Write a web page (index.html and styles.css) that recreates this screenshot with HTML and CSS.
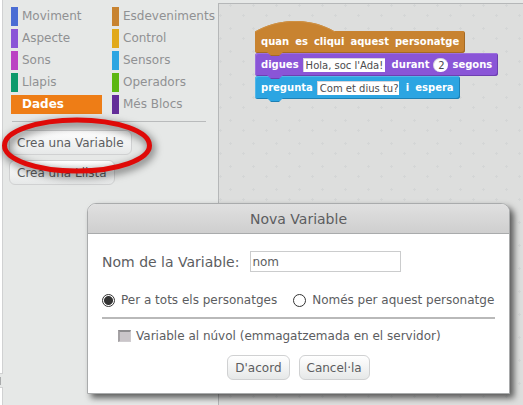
FILE: index.html
```html
<!DOCTYPE html>
<html lang="ca">
<head>
<meta charset="utf-8">
<title>Nova Variable</title>
<link rel="stylesheet" href="styles.css">
</head>
<body>
<div class="app">
  <div class="stage-edge"><span></span></div>
  <aside class="palette">
    <nav class="categories">
      <a class="cat motion" href="#">Moviment</a>
      <a class="cat events" href="#">Esdeveniments</a>
      <a class="cat looks" href="#">Aspecte</a>
      <a class="cat control" href="#">Control</a>
      <a class="cat sound" href="#">Sons</a>
      <a class="cat sensing" href="#">Sensors</a>
      <a class="cat pen" href="#">Llapis</a>
      <a class="cat operators" href="#">Operadors</a>
      <a class="cat data selected" href="#">Dades</a>
      <a class="cat more" href="#">Més Blocs</a>
    </nav>
    <div class="palette-actions">
      <button class="btn" type="button">Crea una Variable</button>
      <button class="btn" type="button">Crea una Llista</button>
    </div>
  </aside>
  <main class="scripts">
    <div class="stack">
      <div class="block hat">
        <svg class="hat-top" width="82" height="12" viewBox="0 0 82 12" aria-hidden="true">
          <path d="M0 12V10.500C24 -3.500 56 -3.500 79 10L82 11V12Z" fill="#c88330"/>
          <path d="M0 11C24 -3 56 -3 80 11" fill="none" stroke="#cf9144"/>
        </svg>
        <span>quan</span><span>es</span><span>cliqui</span><span>aquest</span><span>personatge</span>
      </div>
      <div class="block say">
        <label for="say-text">digues</label>
        <input id="say-text" class="slot" type="text" value="Hola, soc l'Ada!">
        <label class="after" for="say-secs">durant</label>
        <input id="say-secs" class="slot number" type="text" value="2">
        <span>segons</span>
      </div>
      <div class="block ask">
        <label for="ask-text">pregunta</label>
        <input id="ask-text" class="slot" type="text" value="Com et dius tu?">
        <span class="after">i</span><span class="last">espera</span>
      </div>
    </div>
  </main>
</div>

<svg class="marker" width="164" height="76" viewBox="0 0 164 76" aria-hidden="true">
  <ellipse cx="77" cy="34.500" rx="72.500" ry="25.500" fill="none" stroke="#df0a08" stroke-width="5"/>
</svg>

<form class="dialog" role="dialog" aria-labelledby="dialog-title">
  <h1 class="dialog-title" id="dialog-title">Nova Variable</h1>
  <div class="dialog-body">
    <div class="name-row">
      <label for="name">Nom de la Variable:</label>
      <input id="name" type="text" value="nom">
    </div>
    <div class="scope-row">
      <label><input type="radio" name="scope" checked>Per a tots els personatges</label>
      <label><input type="radio" name="scope">Només per aquest personatge</label>
    </div>
    <label class="cloud-row"><input type="checkbox">Variable al núvol (emmagatzemada en el servidor)</label>
    <div class="buttons">
      <button class="btn" type="button">D'acord</button>
      <button class="btn" type="button">Cancel·la</button>
    </div>
  </div>
</form>
</body>
</html>
```
FILE: styles.css
```css
* { box-sizing: border-box; }
body {
  margin: 0;
  overflow: hidden;
  background: #e6e8e7;
  color: #5c5d5f;
  font: 12px/16px "DejaVu Sans", sans-serif;
}
input, button { font: inherit; color: inherit; margin: 0; }

.app { display: flex; min-height: 100vh; }
.stage-edge {
  flex: none;
  display: flex;
  flex-direction: column;
  justify-content: flex-end;
  width: 3px;
  padding-bottom: 17px;
  background: #fff;
  border-right: 1px solid #d0d1d2;
}
.stage-edge span {
  width: 3px;
  height: 15px;
  border: 1px solid #d0d1d2;
  border-width: 1px 0;
  background: linear-gradient(90deg, #a9abac 1px, #e6e8e7 1px) 0 3px / 3px 8px no-repeat #e6e8e7;
}

.palette { flex: none; width: 215px; padding: 7px 0 0 8px; }
.categories {
  display: grid;
  grid-template-columns: 91px 1fr;
  gap: 3px 10px;
}
.cat {
  height: 19px;
  padding-left: 4px;
  border-left: 7px solid;
  line-height: 19px;
  color: #909193;
  text-decoration: none;
}
.motion { border-color: #4a6cd4; }
.looks { border-color: #8a55d7; }
.sound { border-color: #bb42c3; }
.pen { border-color: #0e9a6c; }
.data { border-color: #ee7d16; }
.events { border-color: #c88330; }
.control { border-color: #e1a91a; }
.sensing { border-color: #2ca5e2; }
.operators { border-color: #5cb712; }
.more { border-color: #632d99; }
.selected { background: #ee7d16; color: #fff; font-weight: bold; }

.palette-actions {
  display: flex;
  flex-direction: column;
  align-items: flex-start;
  gap: 5px;
  margin: 7px 12px 0 1px;
  padding-top: 8px;
  border-top: 1px solid #b9bbbc;
}
.palette-actions .btn { margin-left: -3px; }
.btn {
  height: 25px;
  padding: 0 7px;
  border: 1px solid #d0d1d2;
  border-radius: 6px;
  background: linear-gradient(#fff, #e6e8e8);
  white-space: nowrap;
}

.scripts {
  flex: 1;
  margin-top: 3px;
  padding: 27px 0 0 36px;
  border: 1px solid #b5b7b8;
  border-width: 1px 0 0 1px;
  background:
    url("data:image/svg+xml,%3Csvg xmlns='http://www.w3.org/2000/svg' width='23' height='23'%3E%3Cpath d='M0 11.5h3M1.500 10v3M10 1.500h3M11.500 0v3' stroke='%23d4d6d6'/%3E%3C/svg%3E"),
    #dddedd;
}
.stack { display: flex; flex-direction: column; align-items: flex-start; }
.block {
  position: relative;
  display: flex;
  align-items: center;
  height: 23px;
  padding: 0 6px;
  border-radius: 3px;
  background: var(--fill);
  box-shadow: inset 1px 1px var(--light), inset -1px -1px var(--dark);
  color: #fff;
  font-size: 10px;
  font-weight: bold;
  white-space: nowrap;
}
.block::after {
  content: "";
  position: absolute;
  z-index: 1;
  left: 12px;
  top: 100%;
  width: 16px;
  height: 4px;
  margin-top: -1px;
  background: linear-gradient(var(--fill) 75%, var(--dark) 75%);
  clip-path: polygon(0 0, 100% 0, 12px 100%, 4px 100%);
}
.hat { --fill: #c88330; --light: #c88330; --dark: #a46a25; gap: 6px; height: 22px; }
.say { --fill: #8a55d7; --light: #9d70de; --dark: #6d40b0; }
.ask { --fill: #2ca5e2; --light: #52b6e8; --dark: #1d80b4; }
.hat-top { position: absolute; left: 0; bottom: 20px; }
.slot {
  width: 82px;
  height: 14px;
  margin: 0 0 0 4px;
  padding: 0 0 0 2px;
  border: 1px solid #d5d5dc;
  border-width: 1px 0 0 1px;
  border-radius: 0;
  background: #fff;
  color: #4b4c4e;
  font-size: 10px;
  font-weight: normal;
  line-height: 12px;
}
.number { width: 15px; margin: 0 4px; padding: 0; border-radius: 7px; text-align: center; }
.after { margin-left: 7px; }
.last { margin-left: 6px; }

.marker { position: absolute; left: 0; top: 111px; filter: drop-shadow(2px 3px 4px #000a); }

.dialog {
  position: absolute;
  left: 87px;
  right: 13px;
  top: 203px;
  border: 1px solid #a9abac;
  border-radius: 9px 9px 0 0;
  background: #fff;
  box-shadow: 4px 4px 6px #0009;
}
.dialog-title {
  margin: 0;
  padding: 6px 0 5px;
  border-bottom: 1px solid #a9abac;
  border-radius: 8px 8px 0 0;
  background: linear-gradient(#e0e0e0, #cfcfcf);
  font-size: 14px;
  font-weight: normal;
  line-height: 18px;
  text-align: center;
}
.dialog-body { padding: 17px 14px 13px; }
.name-row { display: flex; align-items: center; gap: 11px; font-size: 14px; }
.name-row input {
  width: 151px;
  height: 21px;
  padding: 0 1px;
  border: 1px solid #cbcccd;
  font-size: 12px;
}
.scope-row {
  display: flex;
  gap: 16px;
  margin-top: 20px;
  padding-bottom: 9px;
  border-bottom: 2px solid #b9b9b9;
  white-space: nowrap;
}
.scope-row label { display: flex; align-items: center; gap: 6px; }
.scope-row input {
  appearance: none;
  width: 13px;
  height: 13px;
  border: 1px solid #333;
  border-radius: 50%;
}
.scope-row input:checked { background: radial-gradient(circle, #333 4px, #fff 5px); }
.cloud-row { display: flex; align-items: center; gap: 5px; margin: 9px 0 0 16px; white-space: nowrap; }
.cloud-row input {
  appearance: none;
  width: 13px;
  height: 12px;
  border: 1px solid #d0cdd0;
  border-top: 2px solid #8e8c8f;
  border-left: 2px solid #a5a2a5;
  background: #cac5c9;
}
.buttons { display: flex; justify-content: center; gap: 9px; margin-top: 11px; }
```
